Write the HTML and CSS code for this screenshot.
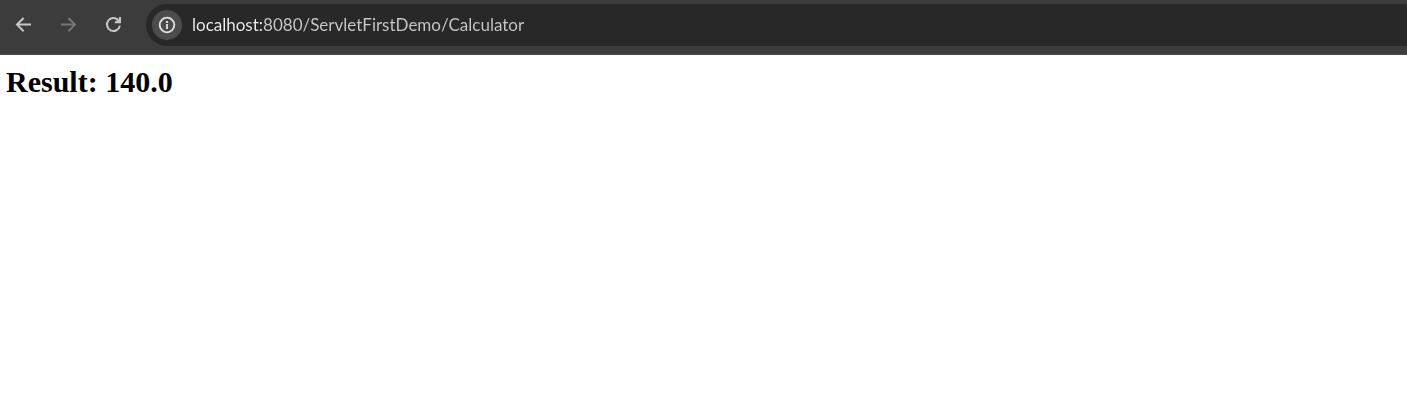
FILE: index.html
```html
<!DOCTYPE html>
<html lang="en">
<head>
<meta charset="utf-8">
<title>localhost:8080/ServletFirstDemo/Calculator</title>
<link rel="stylesheet" href="styles.css">
</head>
<body>
<header class="toolbar">
  <nav class="nav">
    <button class="nav-button" type="button" aria-label="Back">
      <svg class="icon" viewBox="0 0 20 20"><path d="M17 9.6H3.5M9.6 3L3 9.6l6.6 6.6"/></svg>
    </button>
    <button class="nav-button" type="button" aria-label="Forward" disabled>
      <svg class="icon" viewBox="0 0 20 20"><path d="M2 9.6h13.5M9.4 3L16 9.6l-6.6 6.6"/></svg>
    </button>
    <button class="nav-button" type="button" aria-label="Reload">
      <svg class="icon" viewBox="0 0 20 20"><path d="M15 6A6.5 6.5 0 1 0 15.9 10.6M16 2v5.2h-5.2M15.8 7L12.6 4.2"/></svg>
    </button>
  </nav>
  <div class="address">
    <button class="site-info" type="button" aria-label="View site information">
      <svg class="icon" viewBox="0 0 20 20"><circle cx="10" cy="10" r="7.3"/><path d="M10 9v5M10 6v2"/></svg>
    </button>
    <input class="url" type="text" aria-label="Address" spellcheck="false" value="localhost:8080/ServletFirstDemo/Calculator">
  </div>
</header>
<main class="page">
  <h1 class="result">Result: 140.0</h1>
</main>
</body>
</html>
```
FILE: styles.css
```css
body {
  margin: 0;
  background: #fff;
}

.toolbar {
  display: flex;
  align-items: center;
  box-sizing: border-box;
  height: 55px;
  padding: 4px 0 8px 8px;
  border-bottom: 1px solid #4a4a4a;
  background: #3c3c3c;
}

.nav {
  display: flex;
  gap: 13px;
  margin-right: 16px;
}

.nav-button,
.site-info {
  display: flex;
  flex: none;
  align-items: center;
  justify-content: center;
  padding: 0;
  border: 0;
  border-radius: 50%;
  background: none;
  color: #c7c7c7;
}

.nav-button {
  width: 32px;
  height: 32px;
}

.nav-button:disabled {
  color: #757575;
}

.icon {
  width: 20px;
  height: 20px;
  fill: none;
  stroke: currentColor;
  stroke-width: 2;
}

.site-info .icon {
  stroke-width: 1.8;
}

.address {
  display: flex;
  flex: 1;
  align-items: center;
  gap: 10px;
  height: 42px;
  padding-left: 6px;
  border-radius: 21px 0 0 21px;
  background: #282828;
}

.site-info {
  width: 30px;
  height: 30px;
  background: #4c4c4c;
  color: #e3e3e3;
}

.url {
  flex: 1;
  min-width: 0;
  padding: 0;
  border: 0;
  outline: 0;
  background: linear-gradient(90deg, #f0f0f0 70px, #c9c9c9 70px);
  background-clip: text;
  color: transparent;
  font: 17px/26px Lato, sans-serif;
}

.page {
  padding: 9px 6px;
}

.result {
  margin: 0;
  font: bold 30px/36px "Liberation Serif", serif;
}
```
